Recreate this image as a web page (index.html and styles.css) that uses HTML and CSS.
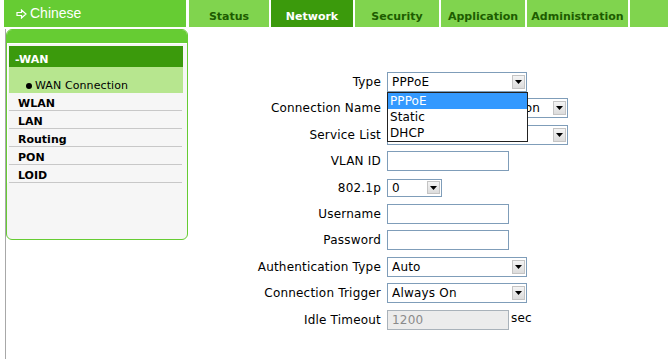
FILE: index.html
```html
<!DOCTYPE html>
<html>
<head>
<meta charset="utf-8">
<link rel="stylesheet" href="styles.css">
</head>
<body>
<div class="topbar">
  <div class="lang">
    <svg class="lang-ico" width="11" height="10" viewBox="0 0 11 10"><path d="M1 3.5 H5.5 V1 L10 5 L5.5 9 V6.5 H1 Z" fill="none" stroke="#fff" stroke-width="1.2" stroke-linejoin="miter"/></svg>
    <span>Chinese</span>
  </div>
  <div class="tab t-status">Status</div>
  <div class="tab t-network active">Network</div>
  <div class="tab t-security">Security</div>
  <div class="tab t-app">Application</div>
  <div class="tab t-admin">Administration</div>
  <div class="tab t-rest"></div>
</div>
<div class="page">
  <aside class="side">
    <div class="side-top"></div>
    <div class="menu">
      <div class="menu-head">-WAN</div>
      <div class="menu-sub"><span class="dot"></span>WAN Connection</div>
      <div class="menu-item">WLAN</div>
      <div class="menu-item">LAN</div>
      <div class="menu-item">Routing</div>
      <div class="menu-item">PON</div>
      <div class="menu-item">LOID</div>
    </div>
  </aside>
  <main class="content">
    <div class="form">
      <div class="lbl">Type</div>
      <div class="ctl ctl-type">
        <div class="sel w140"><span class="sel-text">PPPoE</span><span class="arr"><svg width="7" height="4" viewBox="0 0 7 4"><path d="M0 0H7L3.5 4Z" fill="#000"/></svg></span></div>
        <div class="dropdown">
          <div class="opt on">PPPoE</div>
          <div class="opt">Static</div>
          <div class="opt">DHCP</div>
        </div>
      </div>

      <div class="lbl">Connection Name</div>
      <div class="ctl"><div class="sel w181"><span class="sel-text">Create WAN Connection</span><span class="arr"><svg width="7" height="4" viewBox="0 0 7 4"><path d="M0 0H7L3.5 4Z" fill="#000"/></svg></span></div></div>

      <div class="lbl">Service List</div>
      <div class="ctl"><div class="sel w181"><span class="sel-text">INTERNET</span><span class="arr"><svg width="7" height="4" viewBox="0 0 7 4"><path d="M0 0H7L3.5 4Z" fill="#000"/></svg></span></div></div>

      <div class="lbl">VLAN ID</div>
      <div class="ctl"><div class="inp"></div></div>

      <div class="lbl">802.1p</div>
      <div class="ctl"><div class="sel w55 h18"><span class="sel-text">0</span><span class="arr"><svg width="7" height="4" viewBox="0 0 7 4"><path d="M0 0H7L3.5 4Z" fill="#000"/></svg></span></div></div>

      <div class="lbl">Username</div>
      <div class="ctl"><div class="inp"></div></div>

      <div class="lbl">Password</div>
      <div class="ctl"><div class="inp"></div></div>

      <div class="lbl">Authentication Type</div>
      <div class="ctl"><div class="sel w140"><span class="sel-text">Auto</span><span class="arr"><svg width="7" height="4" viewBox="0 0 7 4"><path d="M0 0H7L3.5 4Z" fill="#000"/></svg></span></div></div>

      <div class="lbl">Connection Trigger</div>
      <div class="ctl"><div class="sel w140"><span class="sel-text">Always On</span><span class="arr"><svg width="7" height="4" viewBox="0 0 7 4"><path d="M0 0H7L3.5 4Z" fill="#000"/></svg></span></div></div>

      <div class="lbl">Idle Timeout</div>
      <div class="ctl"><div class="inp disabled">1200</div><span class="unit">sec</span></div>
    </div>
  </main>
</div>
</body>
</html>
```
FILE: styles.css
```css
* { box-sizing: border-box; }
html, body { margin: 0; padding: 0; background: #fff; }
body { font-family: "DejaVu Sans", Verdana, sans-serif; color: #000; }

.topbar {
  display: flex;
  height: 27px;
  padding-left: 4px;
  gap: 2px;
}
.lang {
  width: 182px;
  margin-right: 1px;
  background: #66cc33;
  color: #fff;
  font-family: "Liberation Sans", Arial, sans-serif;
  font-size: 14px;
  display: flex;
  align-items: flex-start;
  padding: 5px 0 0 12px;
  line-height: 16px;
}
.lang-ico { margin: 4px 3px 0 0; flex: none; }
.tab {
  background: #80d44e;
  color: #1d5c00;
  font-weight: bold;
  font-size: 11px;
  text-align: center;
  padding-top: 10px;
  line-height: 14px;
  white-space: nowrap;
}
.tab.active { background: #3b9a0c; color: #fff; }
.t-status { width: 80px; }
.t-network { width: 82px; }
.t-security { width: 84px; }
.t-app { width: 84px; }
.t-admin { width: 101px; }
.t-rest { flex: 1; }

.page {
  display: flex;
  margin: 2px 0 0 5px;
  border-left: 1px solid #a8a8a8;
  min-height: calc(100vh - 29px);
}

.side {
  width: 182px;
  height: 211px;
  flex: none;
  border: 1px solid #66cc33;
  border-radius: 6px;
  background: #f6f6f6;
  overflow: hidden;
  display: flex;
  flex-direction: column;
}
.side-top { height: 13px; background: #66cc33; flex: none; }
.menu {
  padding: 3px 4px 0 2px;
  box-shadow: inset 1px 1px #fff;
}
.menu-head {
  height: 21px;
  background: #3b9a0c;
  color: #fff;
  font-weight: bold;
  font-size: 11px;
  line-height: 14px;
  padding: 7px 0 0 6px;
}
.menu-sub {
  height: 26px;
  background: #b7e68f;
  font-size: 11px;
  letter-spacing: 0.1px;
  line-height: 14px;
  padding: 11px 0 0 17px;
  display: flex;
  align-items: center;
}
.dot {
  width: 6px;
  height: 6px;
  border-radius: 50%;
  background: #000;
  margin-right: 3px;
  flex: none;
}
.menu-item {
  height: 18px;
  font-weight: bold;
  font-size: 11px;
  line-height: 13px;
  padding: 4px 0 0 9px;
  border-bottom: 1px solid #c8c8c8;
  margin-right: 1px;
}

.content { flex: 1; }
.form {
  display: grid;
  grid-template-columns: 193px auto;
  grid-auto-rows: 20px;
  column-gap: 6px;
  row-gap: 6.4px;
  margin-top: 43px;
  font-size: 12px;
  letter-spacing: 0.2px;
}
.lbl {
  text-align: right;
  line-height: 20px;
  white-space: nowrap;
}
.ctl {
  display: flex;
  align-items: center;
  position: relative;
}
.sel {
  height: 20px;
  border: 1px solid #7f9db9;
  background: #fff;
  display: flex;
  align-items: center;
  padding-left: 4px;
  overflow: hidden;
}
.sel.h18 { height: 18px; }
.w140 { width: 140px; }
.w181 { width: 181px; }
.w55 { width: 55px; }
.sel-text { flex: 1; white-space: nowrap; overflow: hidden; line-height: 16px; }
.arr {
  width: 13px;
  height: 14px;
  margin-right: 1px;
  flex: none;
  border: 1px solid #c4c4c4;
  background: linear-gradient(#f4f4f4, #dcdcdc);
  display: flex;
  align-items: center;
  justify-content: center;
}
.h18 .arr { height: 13px; }
.inp {
  width: 122px;
  height: 20px;
  border: 1px solid #7f9db9;
  background: #fff;
  padding-left: 4px;
  line-height: 18px;
}
.inp.disabled {
  background: #ececec;
  border-color: #a9b2ba;
  color: #8a8a8a;
}
.unit { margin: -4px 0 0 2px; }

.dropdown {
  position: absolute;
  left: 0;
  top: 20px;
  width: 141px;
  border: 1px solid #222;
  background: #fff;
  z-index: 2;
}
.opt {
  height: 16px;
  line-height: 16px;
  padding-left: 2px;
  letter-spacing: 0.1px;
}
.opt.on { background: #3399ff; color: #fff; }
```
